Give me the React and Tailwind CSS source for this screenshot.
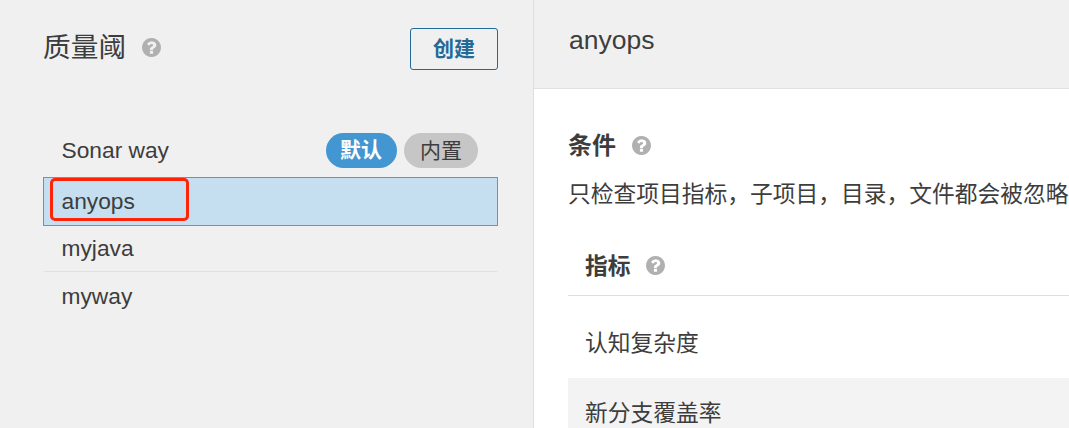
import React from 'react'
import clsx from 'clsx'

const GATES = [
  { name: 'Sonar way', isDefault: true, builtIn: true },
  { name: 'anyops', active: true },
  { name: 'myjava' },
  { name: 'myway' },
]

const METRICS = ['认知复杂度', '新分支覆盖率']

function HelpIcon({ className }) {
  return (
    <svg viewBox="128 128 1536 1536" className={clsx('size-[19px] shrink-0 fill-[#b0b0b0]', className)}>
      <path d="M1024 1376v-192q0-14-9-23t-23-9h-192q-14 0-23 9t-9 23v192q0 14 9 23t23 9h192q14 0 23-9t9-23zm256-672q0-88-55.5-163t-138.5-116-170-41q-243 0-371 213-15 24 8 42l132 100q7 6 19 6 16 0 25-12 53-68 86-92 34-24 86-24 48 0 85.5 26t37.5 59q0 38-20 61t-68 45q-63 28-115.5 86.5t-52.5 125.5v36q0 14 9 23t23 9h192q14 0 23-9t9-23q0-19 21.5-49.5t54.5-49.5q32-18 49-28.5t46-35 44.5-48 28-60.5 12.5-81zm384 192q0 209-103 385.5t-279.5 279.5-385.5 103-385.5-103-279.5-279.5-103-385.5 103-385.5 279.5-279.5 385.5-103 385.5 103 279.5 279.5 103 385.5z" />
    </svg>
  )
}

function GateItem({ gate }) {
  return (
    <li
      className={clsx(
        'relative flex items-center border pl-[17.5px] pr-[19px]',
        gate.active && 'h-[49px] border-[#4b9fd5] bg-[#c5dff0]',
        gate.isDefault && 'h-[53px] border-transparent',
        !gate.active && !gate.isDefault && 'h-[46px] border-transparent not-last:border-b-[#e1e1e1] last:h-[49px]'
      )}
    >
      <span className="-mt-0.5 flex-1">{gate.name}</span>
      {gate.isDefault && (
        <span className="h-[35px] w-[71px] rounded-full bg-[#4296d2] pr-px text-center text-[21px] font-bold leading-[34px] text-white">
          默认
        </span>
      )}
      {gate.builtIn && (
        <span className="ml-[7px] h-[35px] w-[74px] rounded-full bg-[#c6c6c6] text-center text-[21px] leading-[36px]">
          内置
        </span>
      )}
      {/* Highlight box */}
      {gate.active && (
        <span className="absolute left-[6px] top-0 h-[43px] w-[139px] rounded-[5px] border-[3px] border-[#ff2408]" />
      )}
    </li>
  )
}

export default function App() {
  return (
    <div className="flex h-[428px] w-[1069px] overflow-hidden bg-white font-['Liberation_Sans','Noto_Sans_CJK_SC',sans-serif] text-[22.75px] leading-[34px] text-[#3d3d3d]">
      {/* Gate list */}
      <aside className="w-[534px] shrink-0 border-r border-[#dedede] bg-[#f0f0f0] pl-[43px] pr-[35px] pt-7">
        <div className="flex h-[42px] items-center">
          <h1 className="-mt-0.5 text-[27.7px] leading-[38px]">质量阈</h1>
          <HelpIcon className="ml-4 mt-[-3px]" />
          <button className="ml-auto h-[42px] w-[88px] rounded-[3px] border border-[#236a97] text-[21px] font-bold text-[#236a97]">
            创建
          </button>
        </div>
        <ul className="mt-[54px]">
          {GATES.map(g => (
            <GateItem key={g.name} gate={g} />
          ))}
        </ul>
      </aside>

      {/* Gate details */}
      <main className="min-w-0 flex-1">
        <header className="h-[89px] border-b border-[#e1e1e1] bg-[#f0f0f0] pl-[35px] pt-[22px]">
          <h2 className="text-[26.5px] leading-[36px]">anyops</h2>
        </header>
        <div className="pl-[34px] pt-[39px]">
          <div className="flex h-[34px] items-center">
            <h3 className="mt-0.5 text-[24px] font-bold">条件</h3>
            <HelpIcon className="ml-4" />
          </div>
          <p className="mt-[15px] whitespace-nowrap">只检查项目指标，子项目，目录，文件都会被忽略</p>
          <div className="mt-[27px] flex h-[58px] items-center border-b border-[#dedede] pl-[17px]">
            <h4 className="-mt-0.5 font-bold">指标</h4>
            <HelpIcon className="ml-[15px] -mt-0.5" />
          </div>
          <div className="pt-3">
            {METRICS.map(metric => (
              <div key={metric} className="flex h-[70px] items-center pl-[17px] even:bg-[#f3f3f3]">
                {metric}
              </div>
            ))}
          </div>
        </div>
      </main>
    </div>
  )
}
